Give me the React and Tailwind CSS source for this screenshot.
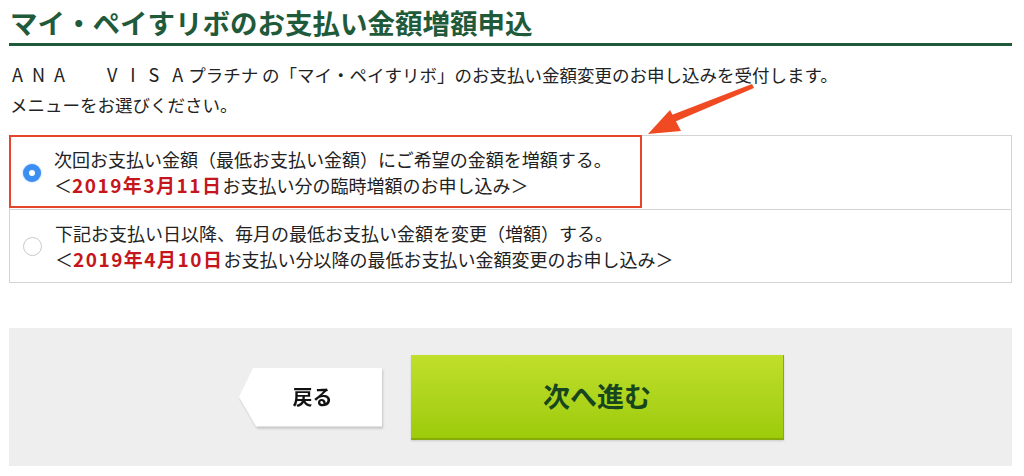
import React from 'react';

const options = [
    {
        id: 'temp',
        text: '次回お支払い金額（最低お支払い金額）にご希望の金額を増額する。',
        date: '2019年3月11日',
        suffix: 'お支払い分の臨時増額のお申し込み',
        checked: true,
    },
    {
        id: 'monthly',
        text: '下記お支払い日以降、毎月の最低お支払い金額を変更（増額）する。',
        date: '2019年4月10日',
        suffix: 'お支払い分以降の最低お支払い金額変更のお申し込み',
        checked: false,
    },
];

const Radio = ({ checked }) =>
    checked ? (
        <span className="w-[18px] h-[18px] rounded-full bg-[#3d8ef2] flex items-center justify-center shrink-0 shadow-[0_0_2px_rgba(61,142,242,0.6)]">
            <span className="w-[6px] h-[6px] rounded-full bg-white" />
        </span>
    ) : (
        <span className="w-[19px] h-[19px] rounded-full bg-white border border-[#c9c9c9] shrink-0" />
    );

const App = () => {
    return (
        <div
            className="relative w-[1024px] h-[476px] bg-white text-[#222] overflow-hidden"
            style={{ fontFamily: '"Noto Sans CJK JP", "Noto Sans", sans-serif' }}
        >
            <div className="ml-[9px] w-[1003px]">
                {/* Heading */}
                <h1 className="pt-[4px] pb-[3px] text-[27.5px] leading-[36px] font-bold text-[#1f5a3b] border-b-[3px] border-[#1f5a3b] pl-[1px]">
                    マイ・ペイすリボのお支払い金額増額申込
                </h1>

                <p className="mt-[13px] text-[17.5px] leading-[30px] pl-[3px] whitespace-nowrap">
                    <span className="text-[18px] tracking-[9px]">ANA</span>
                    <span className="text-[18px] ml-[33px] tracking-[13px]">VISA</span>
                    <span className="-ml-[8px]">プラチナ の「マイ・ペイすリボ」のお支払い金額変更のお申し込みを受付します。</span>
                </p>
                <p className="text-[17.5px] leading-[30px] pl-[1px]">メニューをお選びください。</p>

                {/* Options */}
                <div className="mt-[15px] border border-[#d4d4d4]">
                    {options.map((opt, i) => (
                        <div
                            key={opt.id}
                            className={`relative h-[73px] flex items-center pl-[13px] gap-[13px] ${i > 0 ? 'border-t border-[#d4d4d4]' : ''}`}
                        >
                            <Radio checked={opt.checked} />
                            <div className="text-[18px] leading-[25px] whitespace-nowrap">
                                <div>{opt.text}</div>
                                <div>
                                    ＜<span className="text-[#c4161c] font-bold text-[19px] tracking-[1.5px]">{opt.date}</span>
                                    {opt.suffix}＞
                                </div>
                            </div>
                            {opt.checked && (
                                <div className="absolute left-[-1px] top-[-1px] w-[633px] h-[73px] border-2 border-[#e4462c]" />
                            )}
                        </div>
                    ))}
                </div>

                {/* Buttons */}
                <div className="mt-[45px] h-[138px] bg-[#eeeeee] flex items-center justify-center gap-[29px] pl-[2px]">
                    <div className="drop-shadow-[1px_2px_1px_rgba(0,0,0,0.18)]">
                        <button
                            className="w-[143px] h-[59px] bg-white flex items-center justify-center pl-[4px] text-[20px] font-bold text-[#111]"
                            style={{ clipPath: 'polygon(10% 0, 100% 0, 100% 100%, 12% 100%, 0 50%)' }}
                        >
                            戻る
                        </button>
                    </div>
                    <button className="w-[373px] h-[85px] bg-gradient-to-b from-[#c0df2b] to-[#9dcb08] border-b-2 border-r border-[#86ab0a] shadow-[0_1px_2px_rgba(0,0,0,0.15)] text-[27px] font-bold text-[#17451d] flex items-center justify-center">
                        次へ進む
                    </button>
                </div>
            </div>

            {/* Annotation arrow */}
            <svg className="absolute left-0 top-0 pointer-events-none" width="1024" height="476">
                <polygon points="752,84 754,88 672,123 669,116" fill="#f04a22" />
                <polygon points="648,134 670,110 681,131" fill="#f04a22" />
            </svg>
        </div>
    );
};

export default App;
